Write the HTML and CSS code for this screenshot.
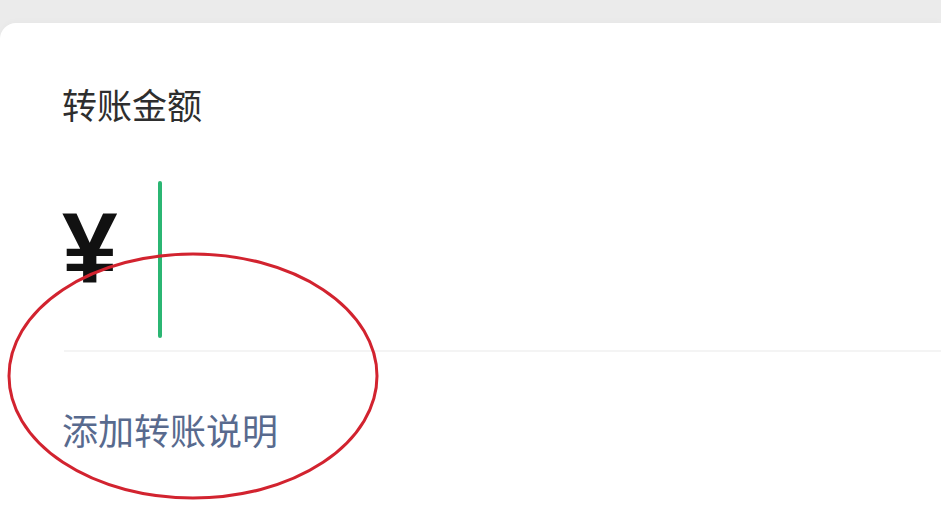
FILE: index.html
```html
<!DOCTYPE html>
<html>
<head>
	<meta charset="utf-8">
	<meta name="viewport" content="width=device-width, initial-scale=1">
	<title>转账</title>
	<link rel="stylesheet" href="styles.css">
</head>
<body>
	<div class="card">
		<p class="label">转账金额</p>
		<div class="amount">
			<span class="yen">¥</span>
			<span class="cursor"></span>
		</div>
		<div class="divider"></div>
		<a class="note" href="#">添加转账说明</a>
		<!-- red mark drawn over the screenshot -->
		<svg class="mark" width="374" height="250" viewBox="0 0 374 250">
			<ellipse cx="187" cy="125" rx="184" ry="122" fill="none" stroke="#d2232f" stroke-width="3"/>
		</svg>
	</div>
</body>
</html>
```

FILE: styles.css
```css
html, body
{
	margin: 0;
	padding: 0;
	height: 100%;
	background-color: #ebebeb;
	overflow: hidden;
}
.card
{
	position: relative;
	margin-top: 23px;
	height: 484px;
	padding: 56px 0 0 62px;
	box-sizing: border-box;
	background-color: #FFFFFF;
	border-radius: 16px 0 0 0;
	box-shadow: 0 -2px 6px rgba(0, 0, 0, 0.02);
	font-family: "Noto Sans CJK SC", "Noto Sans", sans-serif;
}
.label
{
	margin: 0;
	font-size: 35px;
	line-height: 49px;
	color: #2e2e2e;
}
.amount
{
	display: flex;
	align-items: flex-start;
	margin-top: 53px;
}
.yen
{
	margin-top: 17px;
	font-family: "Liberation Sans", Arial, sans-serif;
	font-weight: bold;
	font-size: 100px;
	line-height: 100px;
	color: #111111;
}
.cursor
{
	display: block;
	width: 4px;
	height: 157px;
	margin-left: 40px;
	background-color: #2bb673;
	border-radius: 2px;
}
.divider
{
	margin: 12px 0 0 2px;
	border-top: 2px solid #f4f4f4;
}
.note
{
	display: block;
	margin-top: 52px;
	font-size: 36px;
	line-height: 50px;
	color: #586a8e;
	text-decoration: none;
}
.mark
{
	position: absolute;
	left: 6px;
	top: 228px;
}
```
